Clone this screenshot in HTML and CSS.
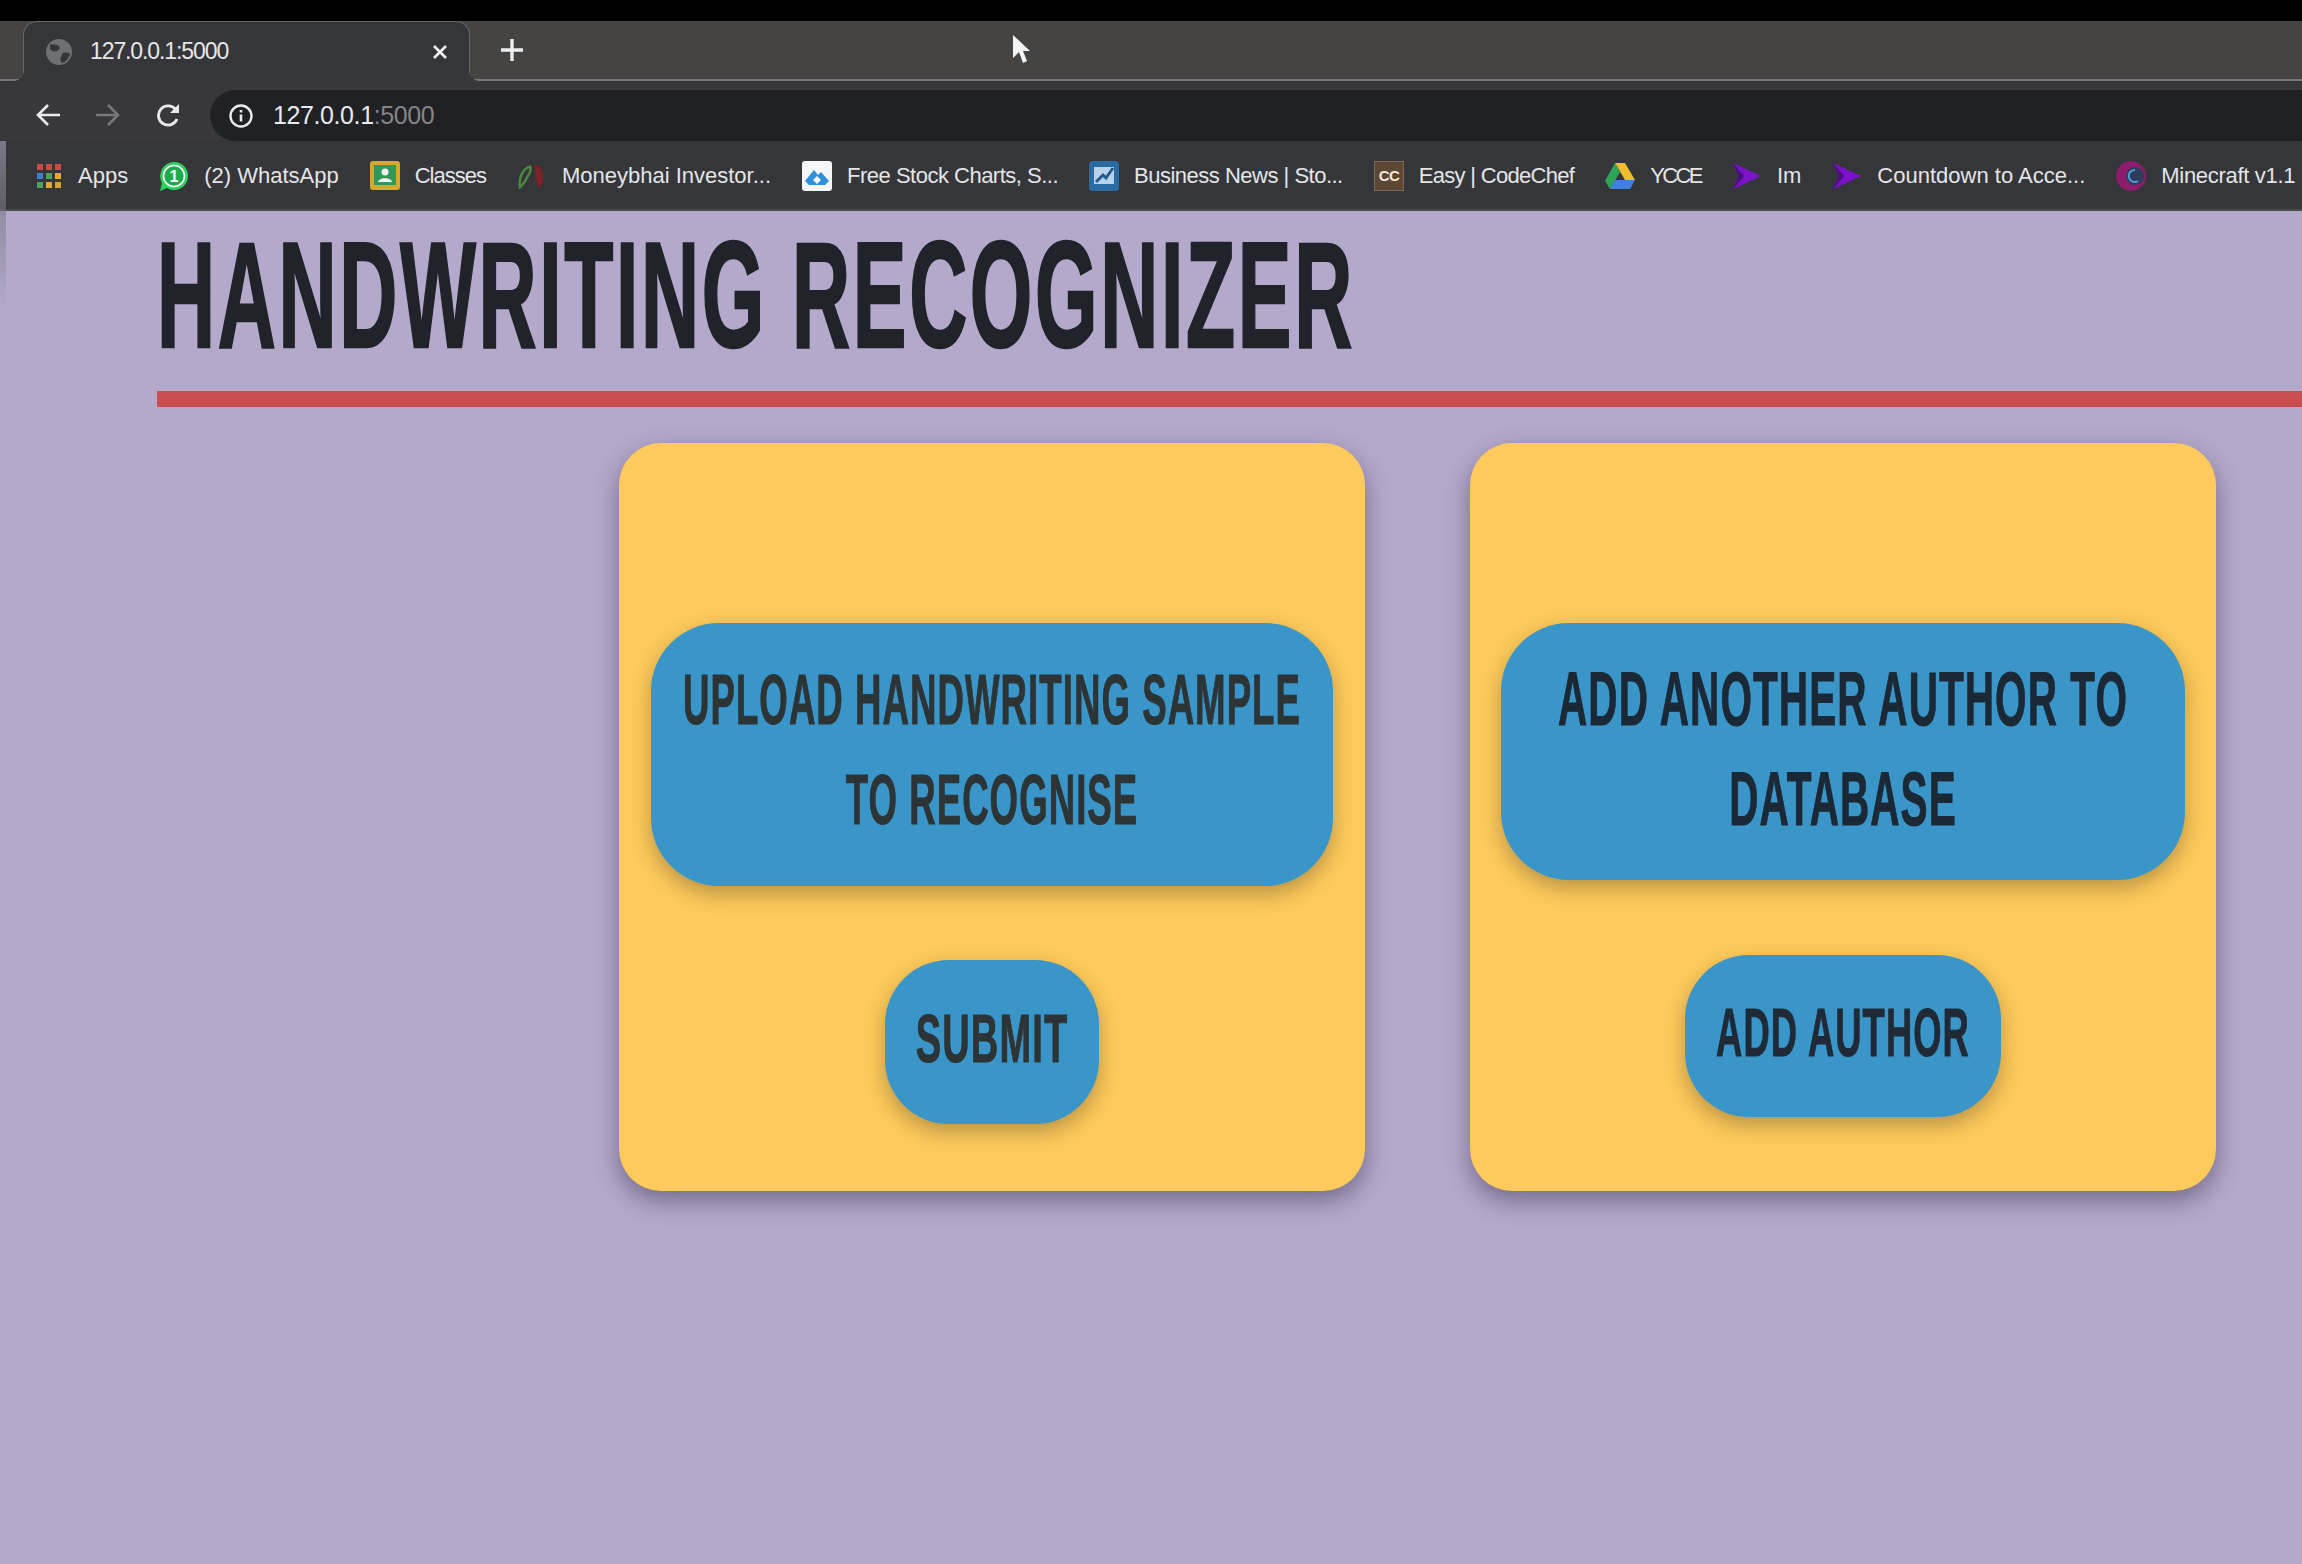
FILE: index.html
```html
<!DOCTYPE html>
<html>
  <head>
    <title>Handwriting Recognizer</title>
    <link rel="stylesheet" href="styles.css">
  </head>
  <body>
    <div class="window-top"></div>

    <div class="tabstrip">
      <div class="tab">
        <svg class="tab-globe" viewBox="0 0 26 26">
          <circle cx="13" cy="13" r="13" fill="#6f7073"/>
          <path d="M5 5c3 1 6 0 8 2s0 4-2 5-5 0-6-1-2-4 0-6zM17 14c3-1 6 0 7 1-1 4-4 8-8 9-2-2-2-4-1-6s1-3 2-4z" fill="#35363a"/>
        </svg>
        <span class="tab-title">127.0.0.1:5000</span>
        <svg class="tab-close" viewBox="0 0 16 14">
          <path d="M2 1l12 12M14 1L2 13" stroke="#f1f1f1" stroke-width="2.6" fill="none"/>
        </svg>
      </div>
      <svg class="new-tab" viewBox="0 0 24 24">
        <path d="M12 1v22M1 12h22" stroke="#eeeeee" stroke-width="3.4" fill="none"/>
      </svg>
    </div>

    <div class="toolbar">
      <svg class="nav-icon back" viewBox="0 0 25 24">
        <path d="M24 12H3M12 2L2 12l10 10" stroke="#e8eaed" stroke-width="2.6" fill="none"/>
      </svg>
      <svg class="nav-icon forward" viewBox="0 0 25 24">
        <path d="M1 12h21M13 2l10 10-10 10" stroke="#77787b" stroke-width="2.6" fill="none"/>
      </svg>
      <svg class="nav-icon reload" viewBox="0 0 25 24">
        <path d="M21 16a9.6 9.6 0 1 1-1-9" stroke="#e8eaed" stroke-width="2.8" fill="none"/>
        <path d="M23 1v9h-9z" fill="#e8eaed"/>
      </svg>
      <div class="omnibox">
        <svg class="info-icon" viewBox="0 0 24 24">
          <circle cx="12" cy="12" r="10.5" stroke="#e8eaed" stroke-width="2.4" fill="none"/>
          <path d="M12 10.5v7M12 6v2.6" stroke="#e8eaed" stroke-width="2.6" fill="none"/>
        </svg>
        <span class="url">127.0.0.1<span class="url-port">:5000</span></span>
      </div>
    </div>

    <div class="bookmarks">
      <div class="bookmark">
        <svg class="fav fav-apps" viewBox="0 0 25 25">
          <g fill="#c94a3e"><rect width="6" height="6"/><rect x="9" width="6" height="6"/><rect x="18" width="6" height="6"/></g>
          <g><rect y="9" width="6" height="6" fill="#3f7fd0"/><rect x="9" y="9" width="6" height="6" fill="#4aa35c"/><rect x="18" y="9" width="6" height="6" fill="#e0a92f"/></g>
          <g><rect y="18" width="6" height="6" fill="#4aa35c"/><rect x="9" y="18" width="6" height="6" fill="#e0a92f"/><rect x="18" y="18" width="6" height="6" fill="#d9a02c"/></g>
        </svg>
        <span>Apps</span>
      </div>
      <div class="bookmark">
        <svg class="fav" viewBox="0 0 30 30">
          <path d="M15 1a14 14 0 0 1 0 28c-3 0-5-.8-7-2l-7 3 2-8A14 14 0 0 1 15 1z" fill="#2ed15f"/>
          <circle cx="15" cy="15" r="10.5" fill="#1faa4b" stroke="#fff" stroke-width="1.6"/>
          <text x="15" y="21" class="fav-badge">1</text>
        </svg>
        <span>(2) WhatsApp</span>
      </div>
      <div class="bookmark tight-2">
        <svg class="fav" viewBox="0 0 30 30">
          <rect width="30" height="29" rx="3" fill="#d7a92a"/>
          <rect x="4" y="4" width="22" height="20" fill="#2f9a57"/>
          <circle cx="15" cy="11" r="3.5" fill="#f2f2f2"/>
          <path d="M8 21c1-5 13-5 14 0z" fill="#f2f2f2"/>
        </svg>
        <span>Classes</span>
      </div>
      <div class="bookmark">
        <svg class="fav" viewBox="0 0 32 32">
          <path d="M3 28C2 18 6 8 14 6c2 4-1 8-3 11-2 4-4 8-8 11z" fill="none" stroke="#4b8a3c" stroke-width="2.6"/>
          <path d="M19 3c6 2 10 9 9 17-1 4-3 7-6 9-1-8-4-18-3-26z" fill="#7a2328"/>
        </svg>
        <span>Moneybhai Investor...</span>
      </div>
      <div class="bookmark tight-1">
        <svg class="fav" viewBox="0 0 30 30">
          <rect width="30" height="30" rx="3" fill="#f4f6f8"/>
          <path d="M3 20l9-11 4 5 3-3 8 9-4 4H7z" fill="#2f8fd8"/>
          <path d="M11 19l4-4 4 4-4 4z" fill="#f4f6f8"/>
        </svg>
        <span>Free Stock Charts, S...</span>
      </div>
      <div class="bookmark tight-1">
        <svg class="fav" viewBox="0 0 30 30">
          <rect width="30" height="30" rx="4" fill="#2b6ba3"/>
          <rect x="5" y="6" width="20" height="17" fill="#b9d2e8"/>
          <path d="M7 21l7-7 3 3 7-10" stroke="#24598c" stroke-width="3" fill="none"/>
        </svg>
        <span>Business News | Sto...</span>
      </div>
      <div class="bookmark tight-easy">
        <svg class="fav" viewBox="0 0 30 30">
          <rect width="30" height="30" fill="#5e4634" stroke="#8a7565" stroke-width="1.5"/>
          <text x="15" y="20" class="fav-cc">CC</text>
        </svg>
        <span>Easy | CodeChef</span>
      </div>
      <div class="bookmark tight-3">
        <svg class="fav" viewBox="0 0 30 30">
          <path d="M10 2h10l10 17H20z" fill="#f2bd2c"/>
          <path d="M10 2L0 20l5 8 10-17z" fill="#2ea35a"/>
          <path d="M5 28h20l5-9H10z" fill="#4080e0"/>
        </svg>
        <span>YCCE</span>
      </div>
      <div class="bookmark">
        <svg class="fav" viewBox="0 0 32 30">
          <path d="M1 1l30 14L1 29l6-14z" fill="#7a12c8"/>
          <path d="M1 1l12 14-6 0zM1 29l12-14-6 0z" fill="#4a0f80"/>
        </svg>
        <span>Im</span>
      </div>
      <div class="bookmark">
        <svg class="fav" viewBox="0 0 32 30">
          <path d="M1 1l30 14L1 29l6-14z" fill="#7a12c8"/>
          <path d="M1 1l12 14-6 0zM1 29l12-14-6 0z" fill="#4a0f80"/>
        </svg>
        <span>Countdown to Acce...</span>
      </div>
      <div class="bookmark tight-0">
        <svg class="fav" viewBox="0 0 30 30">
          <circle cx="15" cy="15" r="15" fill="#8c1c6c"/>
          <circle cx="19" cy="15" r="9" fill="#2f3d5c"/>
          <path d="M19 9a6 6 0 1 0 3 11" stroke="#4a9fd6" stroke-width="2" fill="none"/>
        </svg>
        <span>Minecraft v1.1</span>
      </div>
    </div>

    <main class="page">
      <h1 class="title"><span>HANDWRITING RECOGNIZER</span></h1>
      <div class="title-rule"></div>

      <div class="cards">
        <div class="card">
          <label class="btn btn-upload">
            <span class="line">UPLOAD HANDWRITING SAMPLE</span>
            <span class="line">TO RECOGNISE</span>
          </label>
          <button class="btn btn-submit"><span class="line">SUBMIT</span></button>
        </div>
        <div class="card">
          <label class="btn btn-another">
            <span class="line">ADD ANOTHER AUTHOR TO</span>
            <span class="line">DATABASE</span>
          </label>
          <button class="btn btn-add"><span class="line">ADD AUTHOR</span></button>
        </div>
      </div>
    </main>

    <div class="edge-sliver"></div>
    <svg class="cursor" viewBox="0 0 18 28">
      <path d="M1 0v23l6-6 4 11 4-2-4-10h7z" fill="#f5f5f5"/>
    </svg>
  </body>
</html>
```

FILE: styles.css
```css
* {
  box-sizing: border-box;
}

html,
body {
  margin: 0;
  height: 100%;
}

body {
  display: flex;
  flex-direction: column;
  height: 1564px;
  overflow: hidden;
  background-color: #b4a9cb;
  font-family: "Liberation Sans", Arial, sans-serif;
}

.window-top {
  height: 21px;
  background-color: #000;
}

/* browser chrome */
.tabstrip {
  display: flex;
  align-items: center;
  height: 60px;
  padding-left: 23px;
  background-color: #454442;
  border-bottom: 2px solid #77777a;
}

.tab {
  position: relative;
  display: flex;
  align-items: center;
  width: 447px;
  height: 60px;
  margin-bottom: -2px;
  padding: 0 21px 0 22px;
  background-color: #35363a;
  border-radius: 14px 14px 0 0;
  border: 1px solid #66676a;
  border-bottom: 0;
}

.tab::before,
.tab::after {
  content: "";
  position: absolute;
  bottom: 0;
  width: 10px;
  height: 10px;
}

.tab::before {
  left: -10px;
  background: radial-gradient(circle at 0 0, transparent 9.5px, #35363a 10px);
}

.tab::after {
  right: -10px;
  background: radial-gradient(circle at 100% 0, transparent 9.5px, #35363a 10px);
}

.tab-globe {
  width: 26px;
  height: 26px;
  margin-right: 18px;
}

.tab-title {
  flex: 1;
  font-size: 23px;
  letter-spacing: -1.1px;
  color: #e6e7e9;
}

.tab-close {
  width: 16px;
  height: 14px;
}

.new-tab {
  width: 24px;
  height: 24px;
  margin-left: 30px;
}

.toolbar {
  display: flex;
  align-items: flex-end;
  height: 60px;
  padding-left: 36px;
  background-color: #38383b;
}

.nav-icon {
  width: 25px;
  height: 24px;
  margin-bottom: 14px;
}

.forward {
  margin-left: 34px;
}

.reload {
  margin-left: 36px;
}

.omnibox {
  display: flex;
  align-items: center;
  flex: 1;
  height: 51px;
  margin-left: 29px;
  padding-left: 19px;
  background-color: #202124;
  border-radius: 26px 0 0 26px;
}

.info-icon {
  width: 24px;
  height: 24px;
  margin-right: 20px;
}

.url {
  font-size: 25px;
  letter-spacing: -0.4px;
  color: #e8eaed;
}

.url-port {
  color: #85868a;
}

.bookmarks {
  display: flex;
  align-items: center;
  gap: 31px;
  height: 70px;
  padding: 2px 0 0 37px;
  background-color: #35363a;
  border-bottom: 2px solid #4b4a50;
  white-space: nowrap;
  overflow: hidden;
}

.bookmark {
  display: flex;
  align-items: center;
  gap: 15px;
  flex-shrink: 0;
  font-size: 22px;
  color: #e4e5e7;
}

.tight-0 {
  letter-spacing: -0.3px;
}

.tight-1 {
  letter-spacing: -0.5px;
}

.tight-easy {
  letter-spacing: -0.7px;
}

.tight-2 {
  letter-spacing: -1px;
}

.tight-3 {
  letter-spacing: -2.6px;
}

.fav {
  width: 30px;
  height: 30px;
}

.fav-apps {
  width: 25px;
  height: 25px;
  margin-right: 1px;
}

.fav-badge {
  font-size: 16px;
  font-weight: bold;
  fill: #fff;
  text-anchor: middle;
}

.fav-cc {
  font-size: 15px;
  font-weight: bold;
  fill: #f1e6da;
  text-anchor: middle;
}

/* the app itself */
.page {
  flex: 1;
  padding-left: 157px;
}

.title {
  margin: 8px 0 20px;
  font-size: 150px;
  line-height: 152px;
  font-weight: bold;
  letter-spacing: 5px;
  color: #20232a;
  white-space: nowrap;
}

.title span {
  display: inline-block;
  transform: scaleX(0.536);
  transform-origin: left center;
  -webkit-text-stroke: 2.5px #20232a;
}

.title-rule {
  height: 16px;
  background-color: #c84f4f;
}

.cards {
  display: flex;
  justify-content: flex-end;
  gap: 105px;
  margin-top: 36px;
  padding-right: 86px;
}

.card {
  display: flex;
  flex-direction: column;
  align-items: center;
  width: 746px;
  height: 748px;
  padding-top: 180px;
  background-color: #fdca5b;
  border-radius: 42px;
  box-shadow: 0 10px 24px rgba(40, 30, 60, 0.45);
}

.btn {
  display: block;
  padding: 0;
  border: 0;
  font-family: inherit;
  font-weight: bold;
  line-height: 100px;
  letter-spacing: 2px;
  background-color: #3a96c8;
  box-shadow: 0 8px 20px rgba(60, 50, 30, 0.35);
  color: #2d3436;
}

.line {
  display: flex;
  justify-content: center;
  white-space: nowrap;
  -webkit-text-stroke: 1px currentColor;
}

.btn-upload {
  width: 682px;
  height: 263px;
  margin-bottom: 74px;
  padding-top: 27px;
  border-radius: 68px;
  font-size: 70px;
}

.btn-upload .line {
  transform: scaleX(0.523);
}

.btn-another {
  width: 684px;
  height: 257px;
  margin-bottom: 75px;
  padding-top: 26px;
  border-radius: 68px;
  font-size: 76px;
  color: #1b2835;
}

.btn-another .line {
  transform: scaleX(0.533);
}

.btn-submit {
  width: 214px;
  height: 164px;
  padding-top: 28px;
  padding-bottom: 36px;
  border-radius: 64px;
  font-size: 68px;
}

.btn-submit .line {
  transform: scaleX(0.56);
}

.btn-add {
  width: 316px;
  height: 162px;
  padding-top: 27px;
  padding-bottom: 35px;
  border-radius: 64px;
  font-size: 68px;
  color: #1f2a36;
}

.btn-add .line {
  transform: scaleX(0.535);
}

/* stuff sitting on top of the screenshot */
.edge-sliver {
  position: absolute;
  left: 0;
  top: 141px;
  width: 6px;
  height: 170px;
  background: linear-gradient(#7b7788, rgba(150, 140, 175, 0));
}

.cursor {
  position: absolute;
  left: 1012px;
  top: 35px;
  width: 18px;
  height: 28px;
}
```
